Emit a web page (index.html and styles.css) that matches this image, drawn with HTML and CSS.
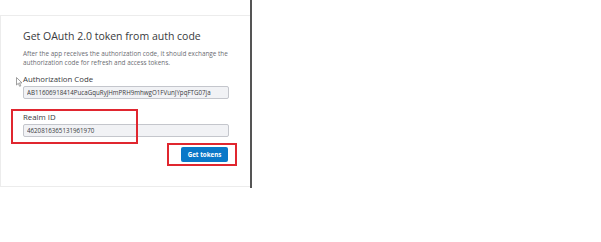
FILE: index.html
```html
<!DOCTYPE html>
<html lang="en">
<head>
    <meta charset="UTF-8">
    <title>Get OAuth 2.0 token</title>
    <link rel="stylesheet" href="styles.css">
</head>
<body>
    <div class="page">
        <div class="left">
            <div class="card">
                <h2 class="title">Get OAuth 2.0 token from auth code</h2>
                <p class="desc">After the app receives the authorization code, it should exchange the authorization code for refresh and access tokens.</p>

                <label class="field-label" for="auth-code">Authorization Code</label>
                <input class="field" id="auth-code" type="text" value="AB11606918414PucaGquRyjHmPRH9mhwgO1FVunJYpqFTG07ja" readonly>

                <label class="field-label realm" for="realm-id">Realm ID</label>
                <input class="field" id="realm-id" type="text" value="4620816365131961970" readonly>

                <div class="actions">
                    <button class="get-btn">Get tokens</button>
                </div>

                <!-- annotation overlays -->
                <svg class="cursor" width="7" height="10" viewBox="0 0 7 10">
                    <path d="M0.5 0.5 L0.5 8 L2.3 6.3 L3.6 9.3 L4.8 8.8 L3.5 5.9 L6 5.9 Z" fill="#fff" stroke="#888" stroke-width="0.8"/>
                </svg>
                <div class="mark mark-realm"></div>
                <div class="mark mark-btn"></div>
            </div>
        </div>
        <div class="vline"></div>
    </div>
</body>
</html>
```

FILE: styles.css
```css
body {
    margin: 0;
    background-color: #fff;
    font-family: "Open Sans", "Liberation Sans", sans-serif;
}
.page {
    display: flex;
    align-items: flex-start;
}
.left {
    width: 250px;
    padding-top: 15px;
}
.card {
    position: relative;
    height: 157px;
    border: 1px solid #ececec;
    border-right: none;
    padding: 13px 22px 0 22px;
}
.title {
    margin: 0;
    font-size: 10.5px;
    line-height: 14px;
    font-weight: 400;
    color: #393a3d;
    white-space: nowrap;
}
.desc {
    margin: 6px 0 0 0;
    font-size: 6.4px;
    line-height: 9px;
    color: #6b6c72;
}
.field-label {
    display: block;
    margin-top: 7px;
    font-size: 7.8px;
    line-height: 10px;
    color: #393a3d;
}
.field-label.realm {
    margin-top: 13px;
}
.field {
    display: block;
    box-sizing: border-box;
    width: 206px;
    height: 13px;
    margin-top: 2px;
    padding: 0 3px;
    border: 1px solid #c4c6cc;
    border-radius: 2px;
    background-color: #f1f2f5;
    font-family: "Open Sans", "Liberation Sans", sans-serif;
    font-size: 6.2px;
    color: #393a3d;
    outline: none;
}
.actions {
    display: flex;
    justify-content: flex-end;
    width: 205px;
    margin-top: 10px;
}
.get-btn {
    width: 47px;
    height: 15px;
    padding: 0;
    border: none;
    border-radius: 2px;
    background-color: #0a78c8;
    color: #fff;
    font-family: "Open Sans", "Liberation Sans", sans-serif;
    font-size: 6.2px;
    font-weight: 700;
    cursor: pointer;
}
.cursor {
    position: absolute;
    left: 15px;
    top: 61px;
}
.mark {
    position: absolute;
    border: 2px solid #e0262f;
}
.mark-realm {
    left: 10px;
    top: 93px;
    width: 123px;
    height: 31px;
}
.mark-btn {
    left: 166px;
    top: 127px;
    width: 66px;
    height: 19px;
}
.vline {
    width: 2px;
    height: 188px;
    background-color: #555;
}
```
